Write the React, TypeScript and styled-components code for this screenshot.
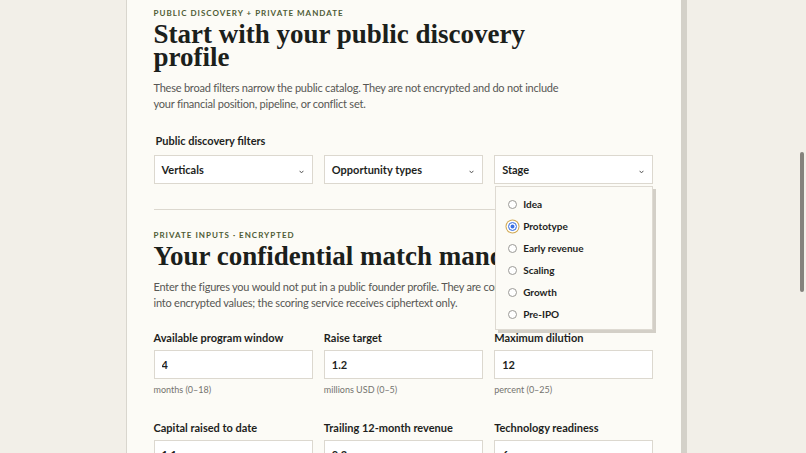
import { FC } from 'react';
import styled, { createGlobalStyle } from 'styled-components';

const GlobalStyle = createGlobalStyle`
  html, body {
    margin: 0;
    padding: 0;
    overflow: hidden;
    background: #f2efe8;
  }
  body {
    font-family: Lato, 'Liberation Sans', sans-serif;
    -webkit-font-smoothing: antialiased;
  }
`;

const Page = styled.div`
  min-height: 100vh;
  display: flex;
  justify-content: center;
`;

const Card = styled.main`
  width: 555px;
  box-sizing: border-box;
  padding: 8px 27px 40px 27px;
  background: #fcfbf6;
  border-left: 1px solid #d9d6ce;
  box-shadow: 6px 0 0 #d4d1c9;
`;

const Eyebrow = styled.div<{ $gap?: number }>`
  margin-top: ${p => p.$gap ?? 0}px;
  font-size: 8px;
  line-height: 10px;
  font-weight: 700;
  letter-spacing: 1px;
  text-transform: uppercase;
  color: #4f5b35;
`;

const Title = styled.h1`
  margin: 5px 0 0;
  font-family: 'Liberation Serif', 'Times New Roman', serif;
  font-size: 27px;
  line-height: 23px;
  font-weight: 700;
  color: #1b201b;
  white-space: nowrap;
`;

const Lede = styled.p`
  margin: 11px 0 0;
  font-size: 11px;
  line-height: 16px;
  letter-spacing: -0.22px;
  color: #575754;
  white-space: nowrap;
`;

const FilterGroup = styled.section`
  margin-top: 21px;
`;

const GroupLabel = styled.div`
  padding-left: 2px;
  font-size: 11px;
  line-height: 16px;
  font-weight: 700;
  color: #1e1f1d;
`;

const SelectRow = styled.div`
  margin-top: 6px;
  display: grid;
  grid-template-columns: repeat(3, minmax(0, 1fr));
  gap: 11px;
`;

const SelectWrap = styled.div`
  position: relative;
`;

const SelectButton = styled.button`
  width: 100%;
  height: 29px;
  box-sizing: border-box;
  display: flex;
  align-items: center;
  justify-content: space-between;
  padding: 0 8px 0 7px;
  background: #ffffff;
  border: 1px solid #dcd8cf;
  border-radius: 0;
  font-family: inherit;
  font-size: 11px;
  font-weight: 700;
  color: #1e1f1d;
  cursor: pointer;

  svg {
    margin-top: 5px;
  }
`;

const Popover = styled.div`
  position: absolute;
  top: calc(100% + 2px);
  left: 1px;
  width: 158px;
  box-sizing: border-box;
  padding: 6px 0 4px 12px;
  background: #fcfbf6;
  border: 1px solid #dedad2;
  box-shadow: 3px 3px 0 #d3cfc7;
  z-index: 5;
`;

const Option = styled.label`
  height: 22px;
  display: flex;
  align-items: center;
  gap: 6px;
  font-size: 10px;
  font-weight: 700;
  color: #1e1f1d;
`;

const Radio = styled.span<{ $checked?: boolean }>`
  width: 9px;
  height: 9px;
  box-sizing: border-box;
  border-radius: 50%;
  background: #ffffff;
  border: 1px solid ${p => (p.$checked ? '#3a6fe0' : '#9b9a96')};
  box-shadow: ${p =>
    p.$checked
      ? 'inset 0 0 0 1.5px #fff, inset 0 0 0 5px #3a6fe0, 0 0 0 1.5px #fff, 0 0 0 2.5px #cfa74f'
      : 'none'};
`;

const Divider = styled.hr`
  margin: 25px 0 0;
  border: 0;
  border-top: 1px solid #dcd8cf;
`;

const FieldGrid = styled.div`
  margin-top: 19px;
  display: grid;
  grid-template-columns: repeat(3, minmax(0, 1fr));
  column-gap: 11px;
  row-gap: 24px;
`;

const Field = styled.label`
  min-width: 0;
  display: flex;
  flex-direction: column;
`;

const FieldLabel = styled.span`
  font-size: 11px;
  line-height: 16px;
  font-weight: 700;
  color: #1e1f1d;
`;

const Input = styled.input`
  width: 100%;
  min-width: 0;
  margin: 4px 0 0;
  height: 29px;
  box-sizing: border-box;
  padding: 0 7px;
  background: #ffffff;
  border: 1px solid #dcd8cf;
  border-radius: 0;
  font-family: inherit;
  font-size: 11px;
  font-weight: 700;
  color: #1e1f1d;
  outline: none;
`;

const Hint = styled.span`
  margin-top: 5px;
  font-size: 9px;
  line-height: 12px;
  color: #74736f;
`;

const ScrollThumb = styled.div`
  position: fixed;
  top: 152px;
  right: 2px;
  width: 4px;
  height: 140px;
  border-radius: 2px;
  background: #85827c;
`;

const Chevron: FC = () => (
  <svg width='5' height='4' viewBox='0 0 5 4' fill='none'>
    <path d='M0.6 0.8 L2.5 2.9 L4.4 0.8' stroke='#555' strokeWidth='1' />
  </svg>
);

const stages = ['Idea', 'Prototype', 'Early revenue', 'Scaling', 'Growth', 'Pre-IPO'];

const fields = [
  { label: 'Available program window', value: '4', hint: 'months (0–18)' },
  { label: 'Raise target', value: '1.2', hint: 'millions USD (0–5)' },
  { label: 'Maximum dilution', value: '12', hint: 'percent (0–25)' },
  { label: 'Capital raised to date', value: '1.1', hint: 'millions USD (0–5)' },
  { label: 'Trailing 12-month revenue', value: '0.2', hint: 'millions USD (0–5)' },
  { label: 'Technology readiness', value: '6', hint: 'level (1–9)' },
];

const App: FC = () => (
  <>
    <GlobalStyle />
    <Page>
      <Card>
        <Eyebrow>Public discovery + private mandate</Eyebrow>
        <Title>
          Start with your public discovery
          <br />
          profile
        </Title>
        <Lede>
          These broad filters narrow the public catalog. They are not encrypted and do not include
          <br />
          your financial position, pipeline, or conflict set.
        </Lede>

        <FilterGroup>
          <GroupLabel>Public discovery filters</GroupLabel>
          <SelectRow>
            <SelectWrap>
              <SelectButton>
                Verticals
                <Chevron />
              </SelectButton>
            </SelectWrap>
            <SelectWrap>
              <SelectButton>
                Opportunity types
                <Chevron />
              </SelectButton>
            </SelectWrap>
            <SelectWrap>
              <SelectButton>
                Stage
                <Chevron />
              </SelectButton>
              <Popover>
                {stages.map(s => (
                  <Option key={s}>
                    <Radio $checked={s === 'Prototype'} />
                    {s}
                  </Option>
                ))}
              </Popover>
            </SelectWrap>
          </SelectRow>
        </FilterGroup>

        <Divider />

        <Eyebrow $gap={20}>Private inputs · encrypted</Eyebrow>
        <Title as='h2'>Your confidential match mandate</Title>
        <Lede>
          Enter the figures you would not put in a public founder profile. They are converted locally
          <br />
          into encrypted values; the scoring service receives ciphertext only.
        </Lede>

        <FieldGrid>
          {fields.map(f => (
            <Field key={f.label}>
              <FieldLabel>{f.label}</FieldLabel>
              <Input readOnly value={f.value} />
              <Hint>{f.hint}</Hint>
            </Field>
          ))}
        </FieldGrid>
      </Card>
    </Page>
    <ScrollThumb />
  </>
);

export default App;
